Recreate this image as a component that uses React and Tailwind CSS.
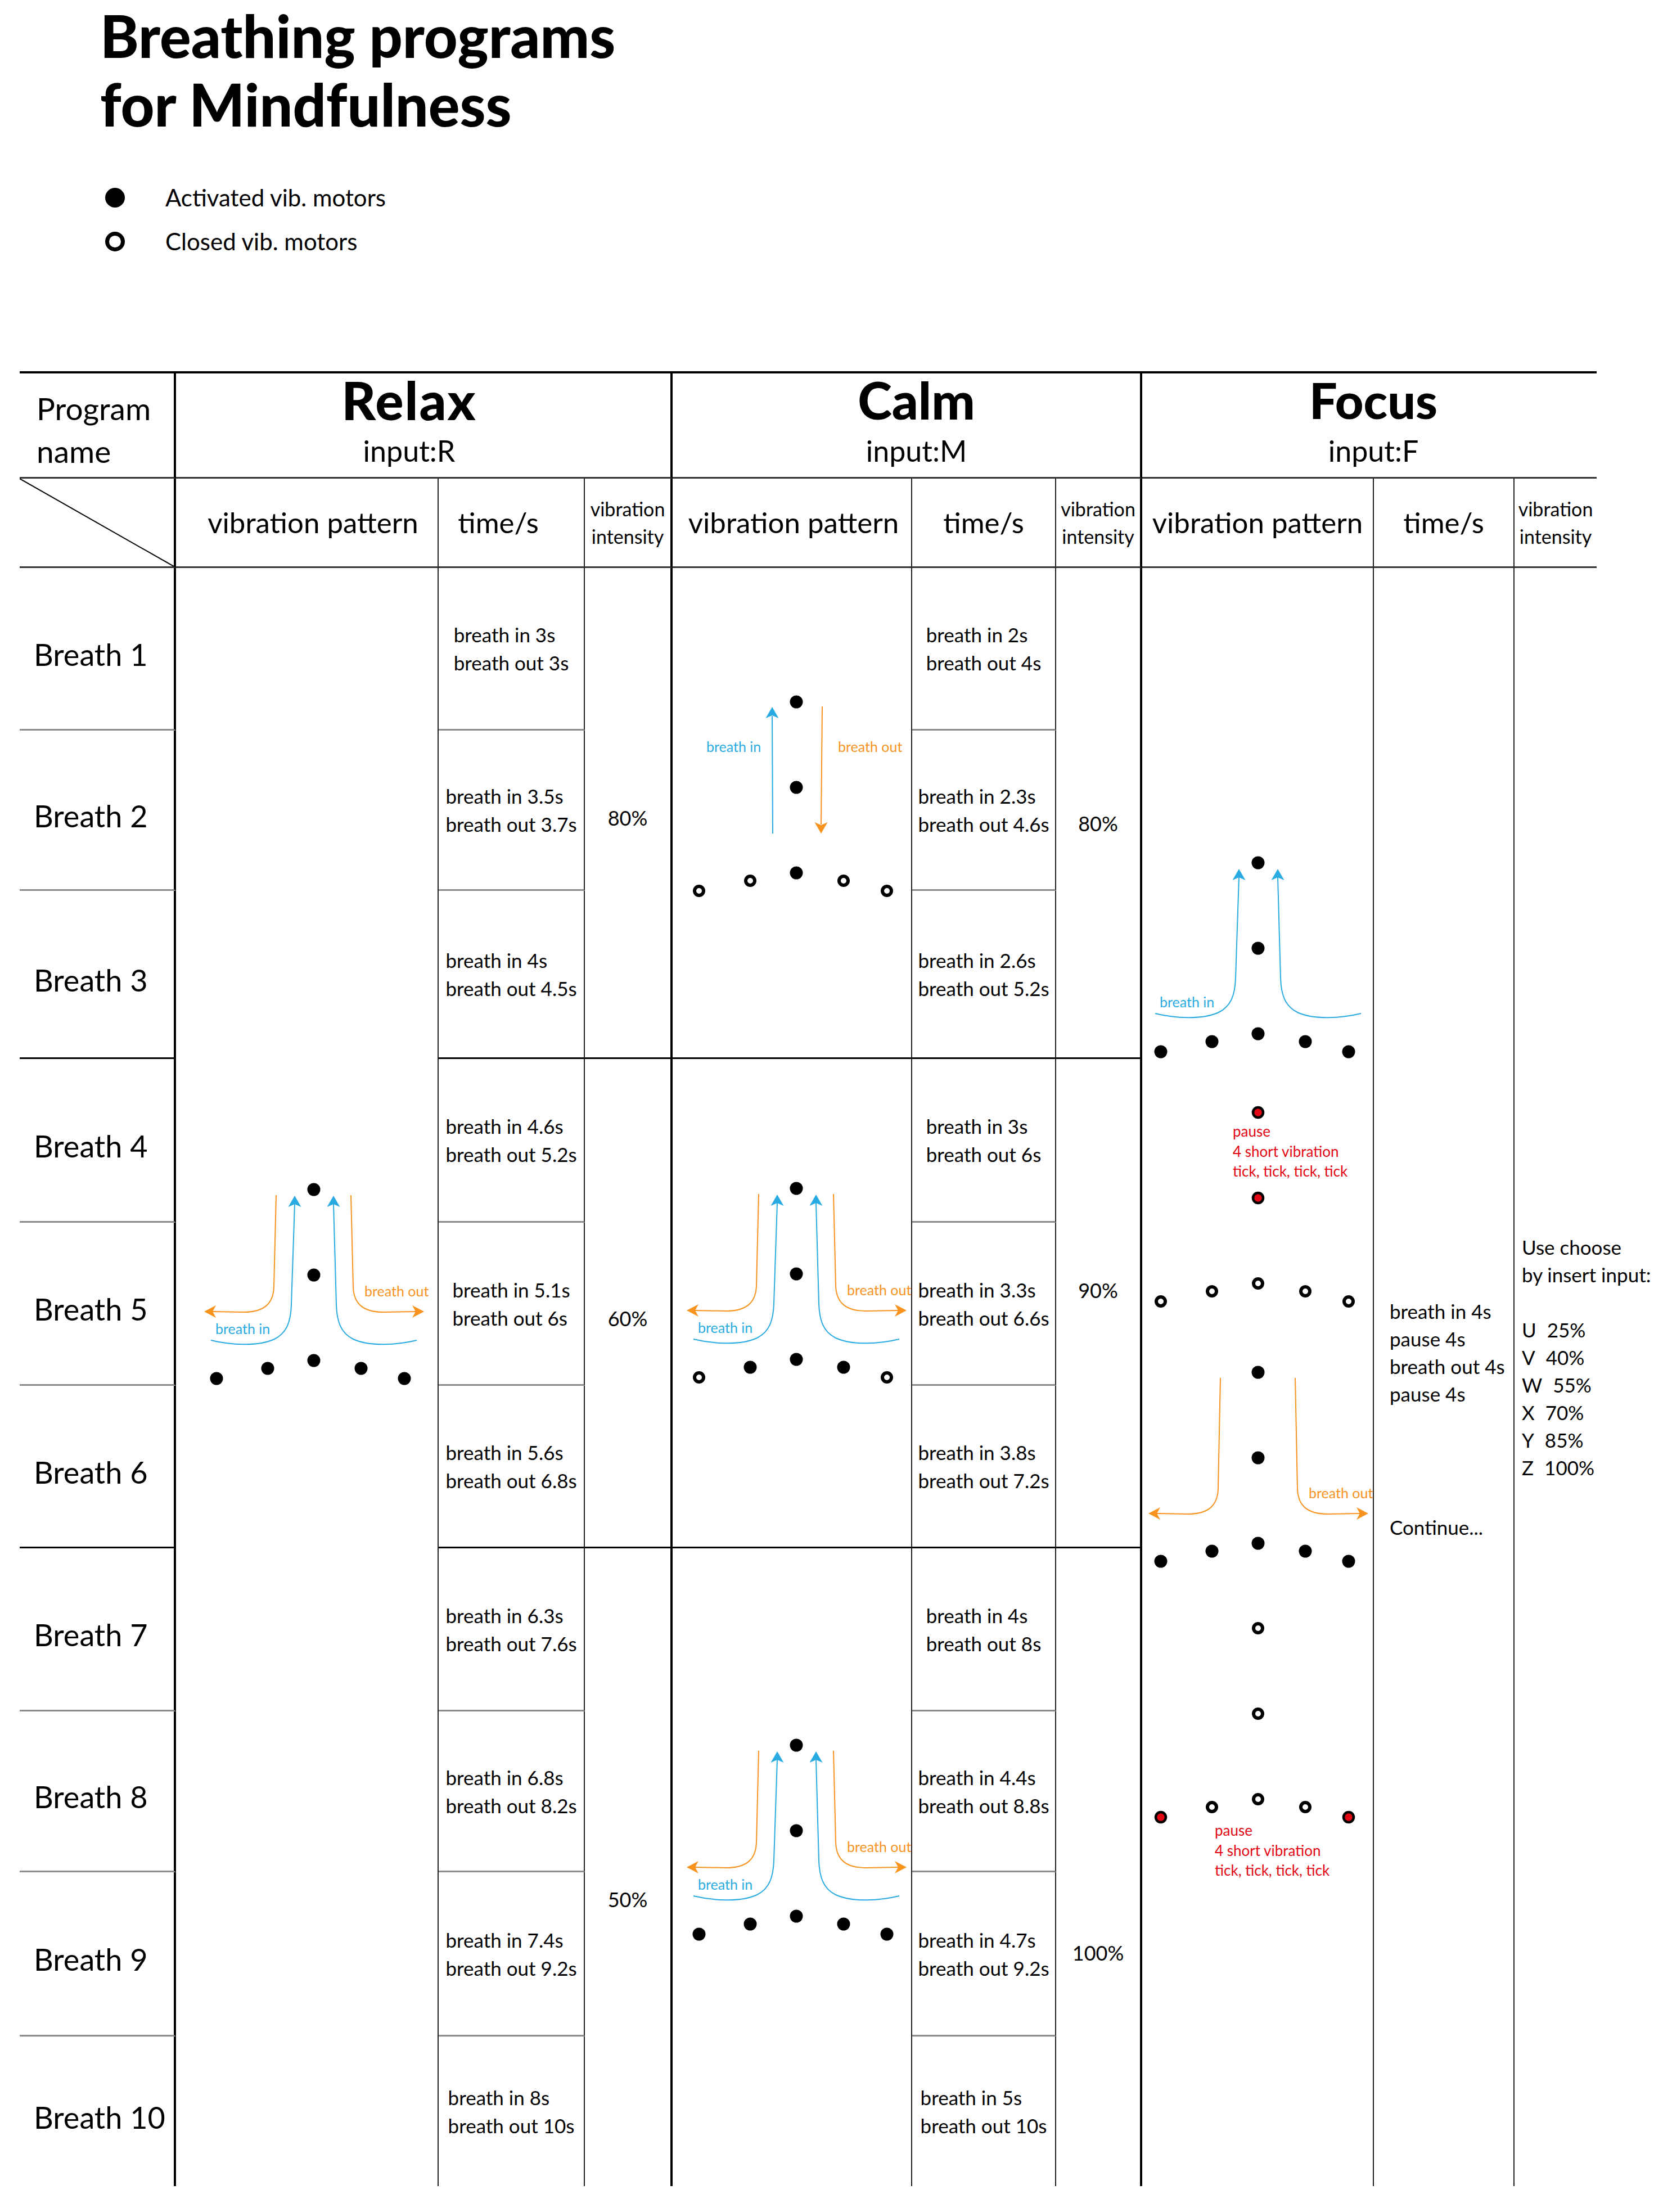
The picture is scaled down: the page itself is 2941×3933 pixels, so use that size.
import React from "react";

const BLUE = "#29abe2";
const ORANGE = "#f7931e";
const RED = "#e30613";

// spots of the 7 motors, relative to the top motor
const SPOTS = [
  [0, 0],
  [0, 152],
  [0, 304],
  [-82, 318],
  [84, 318],
  [-173, 336],
  [161, 336],
];

const ALL_ON = ["on", "on", "on", "on", "on", "on", "on"];

const ROW_START = [
  "row-start-3",
  "row-start-4",
  "row-start-5",
  "row-start-6",
  "row-start-7",
  "row-start-8",
  "row-start-9",
  "row-start-10",
  "row-start-11",
  "row-start-12",
];

const GRAY_LINE = "border-b-[3px] border-b-[#8c8c8c]";
const BLACK_LINE = "border-b-[3px] border-b-black";
const ROW_LINE = [GRAY_LINE, GRAY_LINE, BLACK_LINE, GRAY_LINE, GRAY_LINE, BLACK_LINE, GRAY_LINE, GRAY_LINE, GRAY_LINE, ""];

const THICK = "border-r-4 border-r-black";
const THIN = "border-r-2 border-r-[#222]";

const relaxTimes = [
  ["breath in 3s", "breath out 3s"],
  ["breath in 3.5s", "breath out 3.7s"],
  ["breath in 4s", "breath out 4.5s"],
  ["breath in 4.6s", "breath out 5.2s"],
  ["breath in 5.1s", "breath out 6s"],
  ["breath in 5.6s", "breath out 6.8s"],
  ["breath in 6.3s", "breath out 7.6s"],
  ["breath in 6.8s", "breath out 8.2s"],
  ["breath in 7.4s", "breath out 9.2s"],
  ["breath in 8s", "breath out 10s"],
];

const calmTimes = [
  ["breath in 2s", "breath out 4s"],
  ["breath in 2.3s", "breath out 4.6s"],
  ["breath in 2.6s", "breath out 5.2s"],
  ["breath in 3s", "breath out 6s"],
  ["breath in 3.3s", "breath out 6.6s"],
  ["breath in 3.8s", "breath out 7.2s"],
  ["breath in 4s", "breath out 8s"],
  ["breath in 4.4s", "breath out 8.8s"],
  ["breath in 4.7s", "breath out 9.2s"],
  ["breath in 5s", "breath out 10s"],
];

const levels = [
  ["U", "25%"],
  ["V", "40%"],
  ["W", "55%"],
  ["X", "70%"],
  ["Y", "85%"],
  ["Z", "100%"],
];

function Dot({ x, y, kind }) {
  if (kind === "off") return <circle cx={x} cy={y} r={8} fill="#fff" stroke="#000" strokeWidth={6} />;
  if (kind === "red") return <circle cx={x} cy={y} r={9} fill={RED} stroke="#000" strokeWidth={4.5} />;
  return <circle cx={x} cy={y} r={11.5} fill="#000" />;
}

function Head({ x, y, dir, color }) {
  const pts = {
    up: `${x},${y} ${x + 11.5},${y + 20} ${x},${y + 15} ${x - 11.5},${y + 20}`,
    down: `${x},${y} ${x + 11.5},${y - 20} ${x},${y - 15} ${x - 11.5},${y - 20}`,
    left: `${x},${y} ${x + 21},${y - 11} ${x + 15},${y} ${x + 21},${y + 11}`,
    right: `${x},${y} ${x - 21},${y - 11} ${x - 15},${y} ${x - 21},${y + 11}`,
  }[dir];
  return <polygon points={pts} fill={color} />;
}

function Fountain({ x, y, kinds, inhale, exhale, outY = 218 }) {
  return (
    <g transform={`translate(${x} ${y})`}>
      {inhale && (
        <>
          <path d="M-183 268 C-150 276 -100 280 -70 266 C-48 255 -41 235 -40 205 L-34 26" fill="none" stroke={BLUE} strokeWidth={2} />
          <path d="M183 268 C150 276 100 280 70 266 C48 255 41 235 40 205 L35 26" fill="none" stroke={BLUE} strokeWidth={2} />
          <Head x={-34} y={11} dir="up" color={BLUE} />
          <Head x={35} y={11} dir="up" color={BLUE} />
          <text x={-175} y={257} fill={BLUE} fontSize={25}>
            breath in
          </text>
        </>
      )}
      {exhale && (
        <>
          <path
            d={`M-67 10 L-71 ${outY - 45} C-72 ${outY - 12} -92 ${outY} -125 ${outY} L-180 ${outY - 1}`}
            fill="none"
            stroke={ORANGE}
            strokeWidth={2}
          />
          <path
            d={`M66 10 L70 ${outY - 45} C71 ${outY - 12} 91 ${outY} 124 ${outY} L181 ${outY - 1}`}
            fill="none"
            stroke={ORANGE}
            strokeWidth={2}
          />
          <Head x={-195} y={outY - 1} dir="left" color={ORANGE} />
          <Head x={196} y={outY - 1} dir="right" color={ORANGE} />
          <text x={90} y={outY - 28} fill={ORANGE} fontSize={25}>
            breath out
          </text>
        </>
      )}
      {SPOTS.map(([dx, dy], i) => (
        <Dot key={i} x={dx} y={dy} kind={kinds[i]} />
      ))}
    </g>
  );
}

function Straight({ x, y }) {
  const kinds = ["on", "on", "on", "off", "off", "off", "off"];
  return (
    <g transform={`translate(${x} ${y})`}>
      <line x1={-42} y1={234} x2={-43} y2={25} stroke={BLUE} strokeWidth={2} />
      <Head x={-43} y={9} dir="up" color={BLUE} />
      <line x1={46} y1={8} x2={44} y2={218} stroke={ORANGE} strokeWidth={2} />
      <Head x={44} y={234} dir="down" color={ORANGE} />
      <text x={-160} y={89} fill={BLUE} fontSize={25}>
        breath in
      </text>
      <text x={74} y={89} fill={ORANGE} fontSize={25}>
        breath out
      </text>
      {SPOTS.map(([dx, dy], i) => (
        <Dot key={i} x={dx} y={dy} kind={kinds[i]} />
      ))}
    </g>
  );
}

function PauseNote({ x, y }) {
  return (
    <text fill={RED} fontSize={26}>
      <tspan x={x} y={y}>
        pause
      </tspan>
      <tspan x={x} y={y + 36}>
        4 short vibration
      </tspan>
      <tspan x={x} y={y + 71}>
        tick, tick, tick, tick
      </tspan>
    </text>
  );
}

function TimeCell({ lines, col, i }) {
  return (
    <div className={`${col} ${ROW_START[i]} ${THIN} ${ROW_LINE[i]} flex items-center justify-center`}>
      <div className="text-left text-[35px] leading-[50px] whitespace-nowrap">
        <p>{lines[0]}</p>
        <p>{lines[1]}</p>
      </div>
    </div>
  );
}

function Table() {
  return (
    <div className="ml-[35px] mt-[192px] grid w-[2804px] grid-cols-[278px_467px_260px_156px_426px_256px_153px_412px_250px_146px] grid-rows-[187px_159px_289px_285px_299px_291px_290px_289px_290px_286px_292px_266px] border-t-4 border-black">
      {/* header row 1 */}
      <div className={`col-start-1 row-start-1 ${THICK} border-b-[3px] border-b-[#333] pl-[30px] pt-[24px] text-[55px] leading-[76px]`}>
        Program
        <br />
        name
      </div>
      <div className={`col-start-2 col-span-3 row-start-1 ${THICK} border-b-[3px] border-b-[#333] flex flex-col items-center pr-[50px] pt-[2px]`}>
        <span className="text-[94px] font-black leading-[90px] tracking-[2px]">Relax</span>
        <span className="mt-[15px] text-[52px] leading-[60px]">input:R</span>
      </div>
      <div className={`col-start-5 col-span-3 row-start-1 ${THICK} border-b-[3px] border-b-[#333] flex flex-col items-center pl-[36px] pt-[2px]`}>
        <span className="text-[92px] font-black leading-[90px]">Calm</span>
        <span className="mt-[15px] text-[52px] leading-[60px]">input:M</span>
      </div>
      <div className="col-start-8 col-span-3 row-start-1 border-b-[3px] border-b-[#333] flex flex-col items-center pl-[14px] pt-[2px]">
        <span className="text-[88px] font-black leading-[90px]">Focus</span>
        <span className="mt-[15px] text-[52px] leading-[60px]">input:F</span>
      </div>

      {/* header row 2 */}
      <div className={`relative col-start-1 row-start-2 ${THICK} border-b-[3px] border-b-[#333]`}>
        <svg className="absolute inset-0 h-full w-full" viewBox="0 0 100 100" preserveAspectRatio="none">
          <line x1="0" y1="0" x2="100" y2="100" stroke="#000" strokeWidth="2" vectorEffect="non-scaling-stroke" />
        </svg>
      </div>
      <div className={`col-start-2 row-start-2 ${THIN} border-b-[3px] border-b-[#333] flex items-center justify-center pl-[22px] text-[51px]`}>
        vibration pattern
      </div>
      <div className={`col-start-3 row-start-2 ${THIN} border-b-[3px] border-b-[#333] flex items-center justify-center pr-[46px] text-[51px]`}>
        time/s
      </div>
      <div className={`col-start-4 row-start-2 ${THICK} border-b-[3px] border-b-[#333] flex flex-col items-center justify-center text-[34px] leading-[49px]`}>
        <span>vibration</span>
        <span>intensity</span>
      </div>
      <div className={`col-start-5 row-start-2 ${THIN} border-b-[3px] border-b-[#333] flex items-center justify-center pl-[6px] text-[51px]`}>
        vibration pattern
      </div>
      <div className={`col-start-6 row-start-2 ${THIN} border-b-[3px] border-b-[#333] flex items-center justify-center text-[51px]`}>
        time/s
      </div>
      <div className={`col-start-7 row-start-2 ${THICK} border-b-[3px] border-b-[#333] flex flex-col items-center justify-center text-[34px] leading-[49px]`}>
        <span>vibration</span>
        <span>intensity</span>
      </div>
      <div className={`col-start-8 row-start-2 ${THIN} border-b-[3px] border-b-[#333] flex items-center justify-center text-[51px] whitespace-nowrap`}>
        vibration pattern
      </div>
      <div className={`col-start-9 row-start-2 ${THIN} border-b-[3px] border-b-[#333] flex items-center justify-center text-[51px]`}>
        time/s
      </div>
      <div className="col-start-10 row-start-2 border-b-[3px] border-b-[#333] flex flex-col items-center justify-center text-[34px] leading-[49px]">
        <span>vibration</span>
        <span>intensity</span>
      </div>

      {/* breath names */}
      {relaxTimes.map((_, i) => (
        <div key={`n${i}`} className={`col-start-1 ${ROW_START[i]} ${THICK} ${ROW_LINE[i]} flex items-center pl-[25px] pt-[20px] text-[54px]`}>
          Breath {i + 1}
        </div>
      ))}

      {/* Relax */}
      <div className={`col-start-2 row-start-3 row-span-10 ${THIN}`}>
        <svg className="mt-[1070px] block overflow-visible" width="465" height="400" viewBox="313 2080 465 400" fontFamily="Lato, sans-serif">
          <Fountain x={558} y={2115} kinds={ALL_ON} inhale exhale />
        </svg>
      </div>
      {relaxTimes.map((lines, i) => (
        <TimeCell key={`r${i}`} lines={lines} col="col-start-3" i={i} />
      ))}
      <div className={`col-start-4 row-start-3 row-span-3 ${THICK} ${BLACK_LINE} pt-[417px] text-center text-[36px]`}>80%</div>
      <div className={`col-start-4 row-start-6 row-span-3 ${THICK} ${BLACK_LINE} pt-[434px] text-center text-[36px]`}>60%</div>
      <div className={`col-start-4 row-start-9 row-span-4 ${THICK} pt-[597px] text-center text-[36px]`}>50%</div>

      {/* Calm */}
      <div className={`col-start-5 row-start-3 row-span-3 ${THIN} ${BLACK_LINE}`}>
        <svg className="mt-[210px] block overflow-visible" width="424" height="400" viewBox="1196 1220 424 400" fontFamily="Lato, sans-serif">
          <Straight x={1416} y={1248} />
        </svg>
      </div>
      <div className={`col-start-5 row-start-6 row-span-3 ${THIN} ${BLACK_LINE}`}>
        <svg className="mt-[197px] block overflow-visible" width="424" height="400" viewBox="1196 2080 424 400" fontFamily="Lato, sans-serif">
          <Fountain x={1416} y={2113} kinds={["on", "on", "on", "on", "on", "off", "off"]} inhale exhale />
        </svg>
      </div>
      <div className={`col-start-5 row-start-9 row-span-4 ${THIN}`}>
        <svg className="mt-[317px] block overflow-visible" width="424" height="400" viewBox="1196 3070 424 400" fontFamily="Lato, sans-serif">
          <Fountain x={1416} y={3103} kinds={ALL_ON} inhale exhale />
        </svg>
      </div>
      {calmTimes.map((lines, i) => (
        <TimeCell key={`c${i}`} lines={lines} col="col-start-6" i={i} />
      ))}
      <div className={`col-start-7 row-start-3 row-span-3 ${THICK} ${BLACK_LINE} pt-[427px] text-center text-[36px]`}>80%</div>
      <div className={`col-start-7 row-start-6 row-span-3 ${THICK} ${BLACK_LINE} pt-[384px] text-center text-[36px]`}>90%</div>
      <div className={`col-start-7 row-start-9 row-span-4 ${THICK} pt-[692px] text-center text-[36px]`}>100%</div>

      {/* Focus */}
      <div className={`col-start-8 row-start-3 row-span-10 ${THIN}`}>
        <svg className="mt-[490px] block overflow-visible" width="410" height="1900" viewBox="2031 1500 410 1900" fontFamily="Lato, sans-serif">
          <Fountain x={2237} y={1534} kinds={ALL_ON} inhale />
          <Fountain x={2237} y={1978} kinds={["red", "red", "off", "off", "off", "off", "off"]} />
          <PauseNote x={2192} y={2021} />
          <Fountain x={2237} y={2440} kinds={ALL_ON} exhale outY={252} />
          <Fountain x={2237} y={2895} kinds={["off", "off", "off", "off", "off", "red", "red"]} />
          <PauseNote x={2160} y={3264} />
        </svg>
      </div>
      <div className={`col-start-9 row-start-3 row-span-10 ${THIN} pl-[28px] pt-[1297px] text-[35px] leading-[49px] whitespace-nowrap`}>
        <p>breath in 4s</p>
        <p>pause 4s</p>
        <p>breath out 4s</p>
        <p>pause 4s</p>
        <p className="mt-[188px]">Continue...</p>
      </div>
      <div className="col-start-10 row-start-3 row-span-10 pl-[13px] pt-[1183px] text-[35px] leading-[49px] whitespace-nowrap">
        <p>Use choose</p>
        <p>by insert input:</p>
        <p className="mt-[49px]" />
        <div className="mt-[49px]">
          {levels.map(([k, v]) => (
            <p key={k}>
              {k}
              <span className="ml-[19px]">{v}</span>
            </p>
          ))}
        </div>
      </div>
    </div>
  );
}

export default function App() {
  return (
    <div className="relative h-[3933px] w-[2941px] overflow-hidden bg-white text-black [font-family:Lato,'Noto_Sans',sans-serif]">
      <div className="pl-[178px] pt-[2px]">
        <h1 className="text-[104px] font-black leading-[122px]">
          Breathing programs
          <br />
          for Mindfulness
        </h1>
        <div className="mt-[66px] text-[42px] leading-[78px]">
          <div className="flex items-center">
            <span className="ml-[9px] h-[35px] w-[35px] rounded-full bg-black" />
            <span className="ml-[72px]">Activated vib. motors</span>
          </div>
          <div className="flex items-center">
            <span className="ml-[9px] h-[35px] w-[35px] rounded-full border-[7px] border-black" />
            <span className="ml-[72px]">Closed vib. motors</span>
          </div>
        </div>
      </div>
      <Table />
    </div>
  );
}
